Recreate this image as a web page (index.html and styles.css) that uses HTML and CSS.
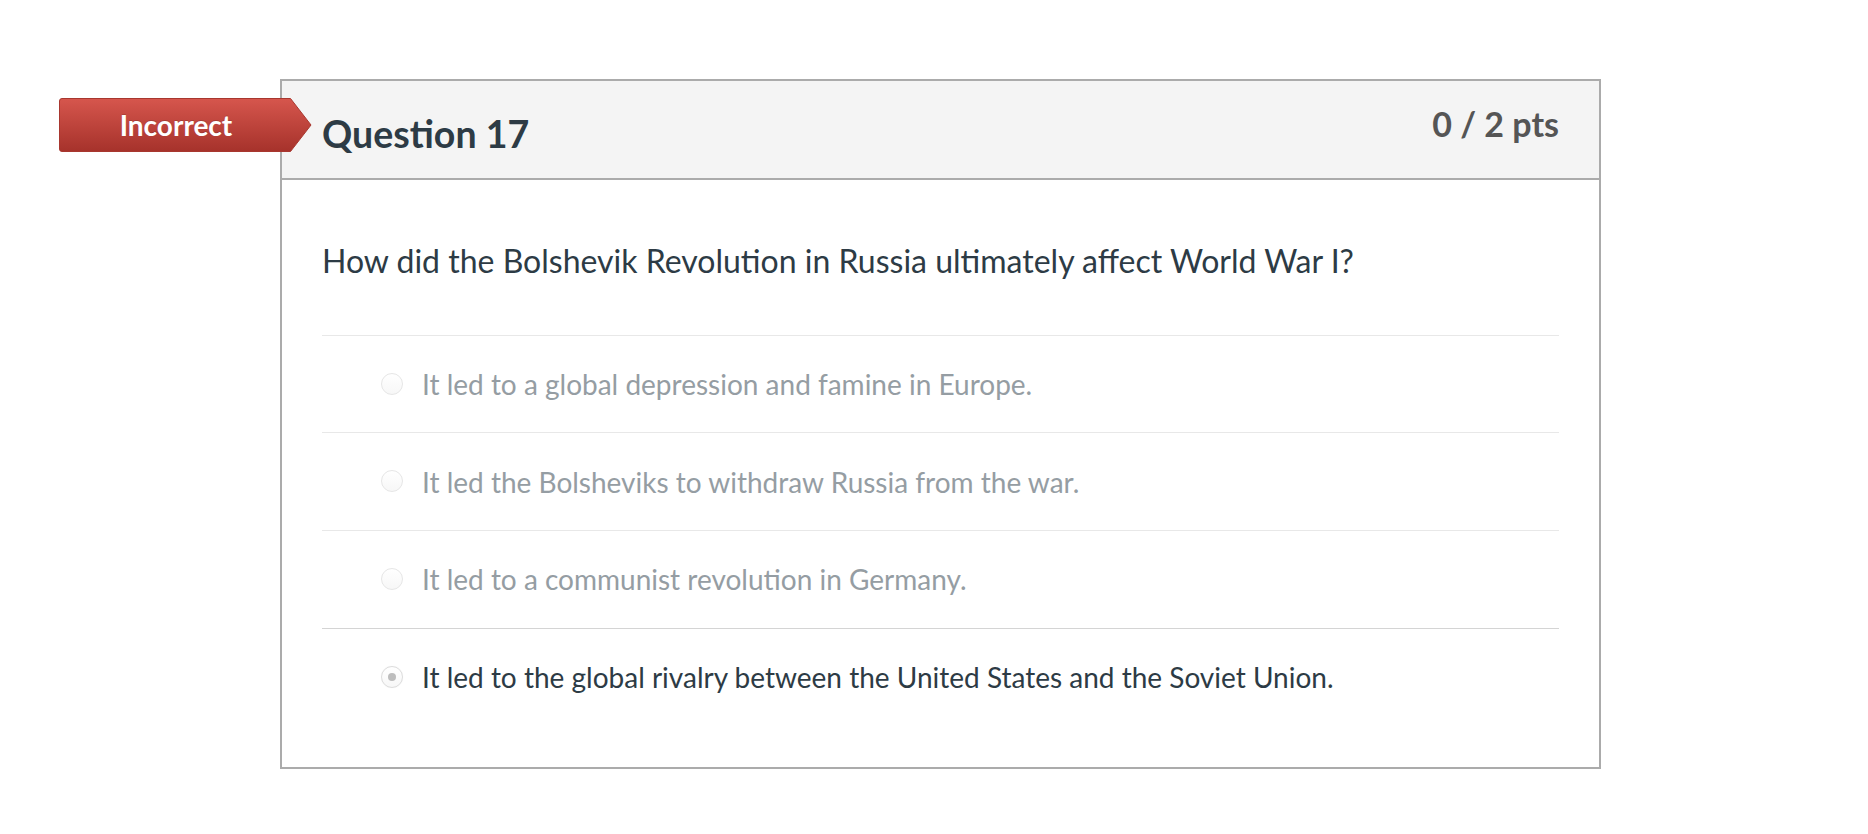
FILE: index.html
```html
<!DOCTYPE html>
<html lang="en">
<head>
<meta charset="utf-8">
<title>Question 17</title>
<link rel="stylesheet" href="styles.css">
</head>
<body>
<div class="question-wrap">
  <div class="badge">
    <svg class="badge-shape" width="253" height="54" viewBox="0 0 253 54" aria-hidden="true">
      <defs>
        <linearGradient id="bg" x1="0" y1="0" x2="0" y2="1">
          <stop offset="0" stop-color="#d6564d"/>
          <stop offset="1" stop-color="#a6322b"/>
        </linearGradient>
      </defs>
      <path d="M3 0.5 H231.5 L252 27 L231.5 53.5 H3 Q0.5 53.5 0.5 51 V3 Q0.5 0.5 3 0.5 Z" fill="url(#bg)" stroke="#a8372f" stroke-width="1"/>
    </svg>
    <span class="badge-text">Incorrect</span>
  </div>
  <div class="card">
    <div class="card-header">
      <h2 class="q-title">Question 17</h2>
      <div class="q-points">0 / 2 pts</div>
    </div>
    <div class="card-body">
      <p class="q-text">How did the Bolshevik Revolution in Russia ultimately affect World War I?</p>
      <div class="answers">
        <div class="answer">
          <span class="radio"></span>
          <span class="answer-text">It led to a global depression and famine in Europe.</span>
        </div>
        <div class="answer">
          <span class="radio"></span>
          <span class="answer-text">It led the Bolsheviks to withdraw Russia from the war.</span>
        </div>
        <div class="answer">
          <span class="radio"></span>
          <span class="answer-text">It led to a communist revolution in Germany.</span>
        </div>
        <div class="answer answer-selected">
          <span class="radio radio-checked"></span>
          <span class="answer-text">It led to the global rivalry between the United States and the Soviet Union.</span>
        </div>
      </div>
    </div>
  </div>
</div>
</body>
</html>
```

FILE: styles.css
```css
html, body {
  margin: 0;
  padding: 0;
  background: #ffffff;
}

body {
  font-family: Lato, "Open Sans", "Liberation Sans", sans-serif;
  color: #2d3b45;
}

.question-wrap {
  position: relative;
  margin: 79px 0 0 280px;
  width: 1321px;
}

.card {
  box-sizing: border-box;
  width: 1321px;
  border: 2px solid #ababab;
  background: #ffffff;
}

.card-header {
  box-sizing: border-box;
  height: 99px;
  background: #f4f4f4;
  border-bottom: 2px solid #ababab;
  display: flex;
  justify-content: space-between;
  align-items: flex-start;
  padding: 0 40px;
}

.q-title {
  margin: 30px 0 0 0;
  font-size: 37.5px;
  line-height: 1.2;
  font-weight: 700;
  color: #2d3b45;
}

.q-points {
  margin-top: 22.5px;
  font-size: 34px;
  line-height: 1.2;
  font-weight: 700;
  color: #555555;
}

.card-body {
  padding: 61.5px 40px 42px 40px;
}

.q-text {
  margin: 0 0 55px 0;
  font-size: 32px;
  line-height: 1.2;
  color: #2d3b45;
}

.answer {
  display: flex;
  align-items: center;
  border-top: 1px solid #e8e8e8;
  padding: 32.4px 0 30.6px 59px;
  font-size: 28px;
  line-height: 1.2;
  color: #959da3;
}

.answer-selected {
  border-top-color: #d4d4d4;
  color: #2d3b45;
}

.radio {
  box-sizing: border-box;
  flex: none;
  width: 22px;
  height: 22px;
  margin: -2.5px 19px 0 0;
  border-radius: 50%;
  border: 1px solid #e6e6e6;
  background: linear-gradient(#ffffff, #f7f7f7);
  display: flex;
  align-items: center;
  justify-content: center;
}

.radio-checked {
  border-color: #dcdcdc;
  box-shadow: 0 0 1px rgba(0, 0, 0, 0.08);
}

.radio-checked::after {
  content: "";
  width: 8px;
  height: 8px;
  border-radius: 50%;
  background: #bdbdbd;
}

.badge {
  position: absolute;
  left: -221px;
  top: 19px;
  width: 253px;
  height: 54px;
}

.badge-shape {
  display: block;
}

.badge-text {
  position: absolute;
  left: 0;
  top: 0;
  width: 234px;
  height: 54px;
  display: flex;
  align-items: center;
  justify-content: center;
  font-size: 28px;
  font-weight: 700;
  color: #ffffff;
  text-shadow: 0 -1px 0 rgba(0, 0, 0, 0.15);
}
```
